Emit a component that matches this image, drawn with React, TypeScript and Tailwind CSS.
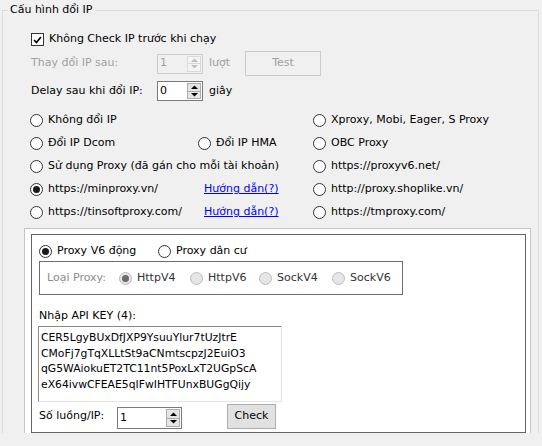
import React from "react";

function Radio({ checked = false, disabled = false }: { checked?: boolean; disabled?: boolean }) {
  return (
    <span
      className={
        disabled
          ? "flex h-[13px] w-[13px] shrink-0 items-center justify-center rounded-full border border-[#bcbcbc] bg-[#e6e6e6]"
          : "flex h-[13px] w-[13px] shrink-0 items-center justify-center rounded-full border border-[#333333] bg-white"
      }
    >
      {checked && (
        <span className={disabled ? "h-[7px] w-[7px] rounded-full bg-[#6a6a6a]" : "h-[7px] w-[7px] rounded-full bg-[#1a1a1a]"} />
      )}
    </span>
  );
}

function RadioItem({
  label,
  checked = false,
  disabled = false,
  labelClass = "",
}: {
  label: string;
  checked?: boolean;
  disabled?: boolean;
  labelClass?: string;
}) {
  return (
    <div className="flex items-center gap-[5px] whitespace-nowrap">
      <Radio checked={checked} disabled={disabled} />
      <span className={labelClass}>{label}</span>
    </div>
  );
}

function Arrow({ up, color }: { up: boolean; color: string }) {
  return (
    <svg width="7" height="4" viewBox="0 0 7 4">
      {up ? <polygon points="0,4 7,4 3.5,0.5" fill={color} /> : <polygon points="0,0 7,0 3.5,3.5" fill={color} />}
    </svg>
  );
}

function Spinner({
  value,
  box,
  disabled = false,
}: {
  value: string;
  box: string;
  disabled?: boolean;
}) {
  return (
    <div
      className={
        disabled
          ? `flex ${box} border border-[#cccccc] bg-[#f0f0f0] text-[#a0a0a0]`
          : `flex ${box} border border-[#7a7a7a] bg-white text-black`
      }
    >
      <div className="flex flex-1 items-center pl-[2px]">{value}</div>
      <div className="flex w-[15px] flex-col gap-0 py-px pr-px">
        <div
          className={
            disabled
              ? "flex flex-1 items-center justify-center border border-[#d9d9d9] bg-[#f4f4f4]"
              : "flex flex-1 items-center justify-center border border-[#adadad] bg-[#e5e5e5]"
          }
        >
          <Arrow up color={disabled ? "#bfbfbf" : "#000"} />
        </div>
        <div
          className={
            disabled
              ? "flex flex-1 items-center justify-center border border-t-0 border-[#d9d9d9] bg-[#f4f4f4]"
              : "flex flex-1 items-center justify-center border border-t-0 border-[#adadad] bg-[#e5e5e5]"
          }
        >
          <Arrow up={false} color={disabled ? "#bfbfbf" : "#000"} />
        </div>
      </div>
    </div>
  );
}

const keys = [
  "CER5LgyBUxDfJXP9YsuuYlur7tUzJtrE",
  "CMoFj7gTqXLLtSt9aCNmtscpzJ2EuiO3",
  "qG5WAiokuET2TC11nt5PoxLxT2UGpScA",
  "eX64ivwCFEAE5qIFwIHTFUnxBUGgQijy",
];

export default function App() {
  return (
    <div className="relative h-[446px] w-[542px] overflow-hidden bg-[#f0f0f0] font-['DejaVu_Sans',sans-serif] text-[11px] text-black">
      <div className="h-[433px] overflow-hidden pl-[2px] pr-[3px]">
        <div className="relative mt-[10px] h-[600px] border border-[#dcdcdc]">
          <div className="absolute left-[5px] top-[-9px] bg-[#f0f0f0] px-[2px] leading-[16px]">Cấu hình đổi IP</div>

          {/* row 1: checkbox */}
          <div className="ml-[28px] mt-[21px] flex h-[15px] items-center gap-[5px]">
            <span className="flex h-[13px] w-[13px] items-center justify-center border border-[#333333] bg-white">
              <svg width="9" height="8" viewBox="0 0 9 8">
                <polyline points="1,4 3.4,6.5 8,1" fill="none" stroke="#000" strokeWidth="1.8" />
              </svg>
            </span>
            <span>Không Check IP trước khi chạy</span>
          </div>

          {/* row 2 */}
          <div className="ml-[28px] mt-[4px] flex h-[25px] items-center">
            <span className="w-[126px] text-[#a0a0a0]">Thay đổi IP sau:</span>
            <Spinner value="1" box="w-[46px] h-[20px]" disabled />
            <span className="ml-[6px] w-[36px] text-[#a0a0a0]">lượt</span>
            <div className="flex h-[25px] w-[76px] items-center justify-center border border-[#cccccc] bg-[#f0f0f0] text-[#a0a0a0]">
              Test
            </div>
          </div>

          {/* row 3 */}
          <div className="ml-[28px] mt-[5px] flex h-[20px] items-center">
            <span className="w-[126px]">Delay sau khi đổi IP:</span>
            <Spinner value="0" box="w-[46px] h-[20px]" />
            <span className="ml-[6px]">giây</span>
          </div>

          {/* radio grid */}
          <div className="ml-[27px] mt-[8px] grid grid-cols-[168px_115px_1fr] auto-rows-[23px] items-center">
            <RadioItem label="Không đổi IP" />
            <div />
            <RadioItem label="Xproxy, Mobi, Eager, S Proxy" />

            <RadioItem label="Đổi IP Dcom" />
            <RadioItem label="Đổi IP HMA" />
            <RadioItem label="OBC Proxy" />

            <div className="col-span-2">
              <RadioItem label="Sử dụng Proxy (đã gán cho mỗi tài khoản)" />
            </div>
            <RadioItem label="https://proxyv6.net/" />

            <RadioItem label="https://minproxy.vn/" checked />
            <span className="ml-[6px] text-[#0000ff] underline">Hướng dẫn(?)</span>
            <RadioItem label="http://proxy.shoplike.vn/" />

            <RadioItem label="https://tinsoftproxy.com/" />
            <span className="ml-[6px] text-[#0000ff] underline">Hướng dẫn(?)</span>
            <RadioItem label="https://tmproxy.com/" />
          </div>

          {/* proxy panel */}
          <div className="ml-[21px] mr-[7px] mt-[4px] border border-[#c4c4c4] bg-white pl-[6px] pr-[4px] pt-[5px] pb-[20px]">
            <div className="h-[199px] border border-[#646464]">
              <div className="ml-[7px] mt-[8px] flex h-[16px] items-center">
                <div className="w-[119px]">
                  <RadioItem label="Proxy V6 động" checked />
                </div>
                <RadioItem label="Proxy dân cư" />
              </div>

              <div className="ml-[7px] mt-[2px] flex h-[34px] w-[364px] items-center border border-[#6d6d6d] pl-[7px] pt-[1px]">
                <span className="w-[72px] text-[#8c8c8c]">Loại Proxy:</span>
                <div className="w-[71px]">
                  <RadioItem label="HttpV4" checked disabled labelClass="text-[#333333]" />
                </div>
                <div className="w-[69px]">
                  <RadioItem label="HttpV6" disabled labelClass="text-[#333333]" />
                </div>
                <div className="w-[73px]">
                  <RadioItem label="SockV4" disabled labelClass="text-[#333333]" />
                </div>
                <RadioItem label="SockV6" disabled labelClass="text-[#333333]" />
              </div>

              <div className="ml-[7px] mt-[13px] flex h-[16px] items-center">Nhập API KEY (4):</div>

              <div className="ml-[6px] mt-[2px] h-[76px] w-[244px] border border-b-[#e3e3e3] border-l-[#8a8a8a] border-r-[#e3e3e3] border-t-[#8a8a8a] bg-white pl-[2px] pt-[3px] text-[10.8px] leading-[15.7px]">
                {keys.map((k) => (
                  <div key={k} className="whitespace-pre">
                    {k}
                  </div>
                ))}
              </div>

              <div className="ml-[7px] mt-[2px] flex h-[25px] items-center">
                <span className="w-[78px]">Số luồng/IP:</span>
                <div className="mt-[3px]">
                  <Spinner value="1" box="w-[65px] h-[22px]" />
                </div>
                <div className="ml-[45px] flex h-[25px] w-[49px] items-center justify-center border border-[#adadad] bg-[#e1e1e1]">
                  Check
                </div>
              </div>
            </div>
          </div>
        </div>
      </div>
    </div>
  );
}
